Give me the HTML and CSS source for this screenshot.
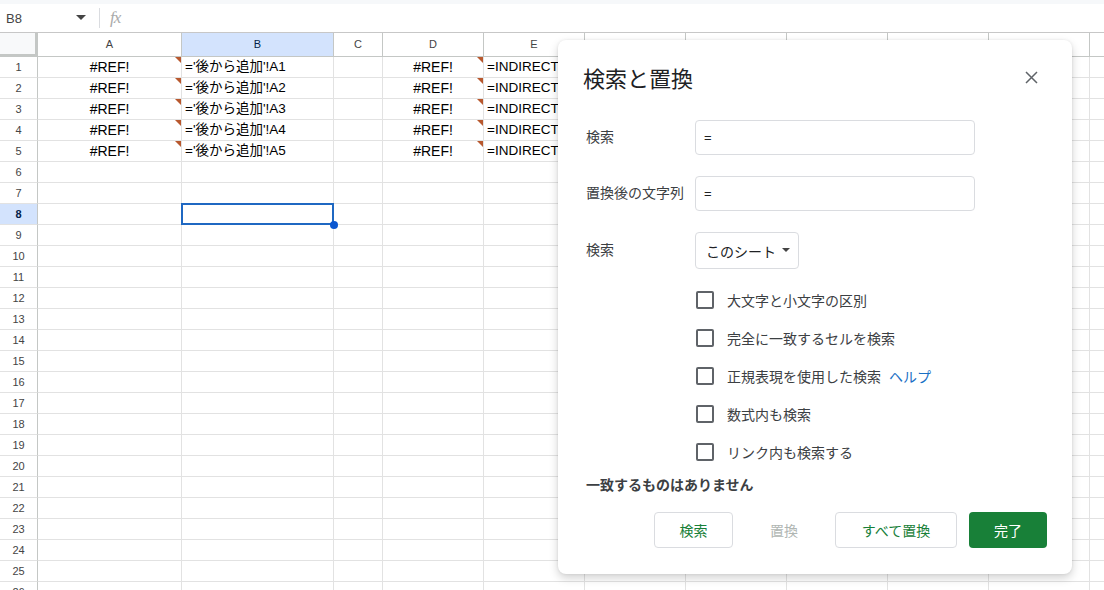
FILE: index.html
```html
<!DOCTYPE html>
<html lang="ja">
<head>
<meta charset="utf-8">
<title>検索と置換</title>
<link rel="stylesheet" href="styles.css">
</head>
<body>
<div class="app">
  <div class="strip"></div>
  <div class="fbar">
    <div class="namebox">B8</div>
    <svg class="nb-caret" width="10" height="6" viewBox="0 0 10 6"><path d="M0 0h10L5 5z" fill="#444"/></svg>
    <div class="fdiv"></div>
    <div class="fx">fx</div>
  </div>
  <div class="sheet">
    <div class="row hdr">
      <span class="corner"></span><span>A</span><span class="sel">B</span><span>C</span><span>D</span><span>E</span><span>F</span><span>G</span><span>H</span><span>I</span><span>J</span><span>K</span><span>L</span>
    </div>
    <div class="row"><span class="rn">1</span><span class="ctr err">#REF!</span><span>='後から追加'!A1</span><span></span><span class="ctr err">#REF!</span><span class="ovf">=INDIRECT("'後から追加'!A1")</span><span></span><span></span><span></span><span></span><span></span><span></span><span></span></div>
    <div class="row"><span class="rn">2</span><span class="ctr err">#REF!</span><span>='後から追加'!A2</span><span></span><span class="ctr err">#REF!</span><span class="ovf">=INDIRECT("'後から追加'!A2")</span><span></span><span></span><span></span><span></span><span></span><span></span><span></span></div>
    <div class="row"><span class="rn">3</span><span class="ctr err">#REF!</span><span>='後から追加'!A3</span><span></span><span class="ctr err">#REF!</span><span class="ovf">=INDIRECT("'後から追加'!A3")</span><span></span><span></span><span></span><span></span><span></span><span></span><span></span></div>
    <div class="row"><span class="rn">4</span><span class="ctr err">#REF!</span><span>='後から追加'!A4</span><span></span><span class="ctr err">#REF!</span><span class="ovf">=INDIRECT("'後から追加'!A4")</span><span></span><span></span><span></span><span></span><span></span><span></span><span></span></div>
    <div class="row"><span class="rn">5</span><span class="ctr err">#REF!</span><span>='後から追加'!A5</span><span></span><span class="ctr err">#REF!</span><span class="ovf">=INDIRECT("'後から追加'!A5")</span><span></span><span></span><span></span><span></span><span></span><span></span><span></span></div>
    <div class="row"><span class="rn">6</span><span></span><span></span><span></span><span></span><span></span><span></span><span></span><span></span><span></span><span></span><span></span><span></span></div>
    <div class="row"><span class="rn">7</span><span></span><span></span><span></span><span></span><span></span><span></span><span></span><span></span><span></span><span></span><span></span><span></span></div>
    <div class="row"><span class="rn sel">8</span><span></span><span class="active"></span><span></span><span></span><span></span><span></span><span></span><span></span><span></span><span></span><span></span><span></span></div>
    <div class="row"><span class="rn">9</span><span></span><span></span><span></span><span></span><span></span><span></span><span></span><span></span><span></span><span></span><span></span><span></span></div>
    <div class="row"><span class="rn">10</span><span></span><span></span><span></span><span></span><span></span><span></span><span></span><span></span><span></span><span></span><span></span><span></span></div>
    <div class="row"><span class="rn">11</span><span></span><span></span><span></span><span></span><span></span><span></span><span></span><span></span><span></span><span></span><span></span><span></span></div>
    <div class="row"><span class="rn">12</span><span></span><span></span><span></span><span></span><span></span><span></span><span></span><span></span><span></span><span></span><span></span><span></span></div>
    <div class="row"><span class="rn">13</span><span></span><span></span><span></span><span></span><span></span><span></span><span></span><span></span><span></span><span></span><span></span><span></span></div>
    <div class="row"><span class="rn">14</span><span></span><span></span><span></span><span></span><span></span><span></span><span></span><span></span><span></span><span></span><span></span><span></span></div>
    <div class="row"><span class="rn">15</span><span></span><span></span><span></span><span></span><span></span><span></span><span></span><span></span><span></span><span></span><span></span><span></span></div>
    <div class="row"><span class="rn">16</span><span></span><span></span><span></span><span></span><span></span><span></span><span></span><span></span><span></span><span></span><span></span><span></span></div>
    <div class="row"><span class="rn">17</span><span></span><span></span><span></span><span></span><span></span><span></span><span></span><span></span><span></span><span></span><span></span><span></span></div>
    <div class="row"><span class="rn">18</span><span></span><span></span><span></span><span></span><span></span><span></span><span></span><span></span><span></span><span></span><span></span><span></span></div>
    <div class="row"><span class="rn">19</span><span></span><span></span><span></span><span></span><span></span><span></span><span></span><span></span><span></span><span></span><span></span><span></span></div>
    <div class="row"><span class="rn">20</span><span></span><span></span><span></span><span></span><span></span><span></span><span></span><span></span><span></span><span></span><span></span><span></span></div>
    <div class="row"><span class="rn">21</span><span></span><span></span><span></span><span></span><span></span><span></span><span></span><span></span><span></span><span></span><span></span><span></span></div>
    <div class="row"><span class="rn">22</span><span></span><span></span><span></span><span></span><span></span><span></span><span></span><span></span><span></span><span></span><span></span><span></span></div>
    <div class="row"><span class="rn">23</span><span></span><span></span><span></span><span></span><span></span><span></span><span></span><span></span><span></span><span></span><span></span><span></span></div>
    <div class="row"><span class="rn">24</span><span></span><span></span><span></span><span></span><span></span><span></span><span></span><span></span><span></span><span></span><span></span><span></span></div>
    <div class="row"><span class="rn">25</span><span></span><span></span><span></span><span></span><span></span><span></span><span></span><span></span><span></span><span></span><span></span><span></span></div>
    <div class="row"><span class="rn">26</span><span></span><span></span><span></span><span></span><span></span><span></span><span></span><span></span><span></span><span></span><span></span><span></span></div>
  </div>

  <div class="dialog">
    <div class="dlg-head">
      <h1 class="dlg-title">検索と置換</h1>
      <svg class="close" width="13" height="13" viewBox="0 0 13 13"><path d="M1 1l11 11M12 1L1 12" stroke="#5f6368" stroke-width="1.5" fill="none"/></svg>
    </div>
    <div class="form">
      <label class="lbl">検索</label>
      <div class="input">=</div>
      <label class="lbl">置換後の文字列</label>
      <div class="input">=</div>
      <label class="lbl">検索</label>
      <div class="dd-wrap"><div class="dropdown"><span>このシート</span><svg width="8" height="5" viewBox="0 0 8 5"><path d="M0 0h8L4 4z" fill="#444"/></svg></div></div>
    </div>
    <div class="checks">
      <div class="chk"><span class="box"></span><span>大文字と小文字の区別</span></div>
      <div class="chk"><span class="box"></span><span>完全に一致するセルを検索</span></div>
      <div class="chk"><span class="box"></span><span>正規表現を使用した検索</span><a class="help">ヘルプ</a></div>
      <div class="chk"><span class="box"></span><span>数式内も検索</span></div>
      <div class="chk"><span class="box"></span><span>リンク内も検索する</span></div>
    </div>
    <div class="nomatch">一致するものはありません</div>
    <div class="buttons">
      <button class="btn outline b-find">検索</button>
      <button class="btn disabled b-rep">置換</button>
      <button class="btn outline b-all">すべて置換</button>
      <button class="btn primary b-done">完了</button>
    </div>
  </div>
</div>
</body>
</html>
```
FILE: styles.css
```css
* { box-sizing: border-box; }
html, body { margin: 0; padding: 0; }
body {
  width: 1104px;
  height: 590px;
  overflow: hidden;
  background: #fff;
  font-family: "Liberation Sans", Arial, "Noto Sans CJK JP", sans-serif;
  color: #000;
}
.app { position: relative; width: 1104px; height: 590px; overflow: hidden; }

.strip { height: 4px; background: #f6f8fa; }

.fbar {
  height: 29px;
  display: flex;
  align-items: center;
  border-bottom: 1px solid #c7c7c7;
  background: #fff;
}
.namebox { width: 72px; padding-left: 6px; font-size: 13px; color: #444; }
.nb-caret { margin-left: 4px; }
.fdiv { width: 1px; height: 20px; background: #dadce0; margin-left: 13px; }
.fx {
  margin-left: 10px;
  font-family: "Liberation Serif", serif;
  font-style: italic;
  font-size: 17px;
  color: #aaa;
  letter-spacing: -1px;
}

.sheet { display: flex; flex-direction: column; }
.row {
  display: grid;
  grid-template-columns: 38px 144px 152px 49px 101px 101px 101px 101px 101px 101px 101px 101px 101px;
  height: 21px;
  font-size: 13.5px;
}
.row > span {
  position: relative;
  border-right: 1px solid #e2e2e2;
  border-bottom: 1px solid #e2e2e2;
  padding: 0 3px;
  line-height: 20px;
  white-space: nowrap;
  overflow: hidden;
}
.row > span.ovf { overflow: visible; z-index: 1; background: #fff; }
.row > .ctr { text-align: center; font-size: 14px; }

.row.hdr { height: 24px; }
.row.hdr > span {
  text-align: center;
  font-size: 11px;
  color: #444;
  line-height: 23px;
  border-right: 1px solid #c4c7c5;
  border-bottom: 1px solid #c4c7c5;
}
.row.hdr > span.sel { background: #d3e3fd; color: #041e49; }
.row.hdr > span.corner {
  background: #f8f9fa;
  border-right: 3px solid #c4c7c5;
  border-bottom: 3px solid #c4c7c5;
}

.row > span.rn {
  text-align: center;
  font-size: 11px;
  color: #444;
  border-right: 1px solid #c4c7c5;
  border-bottom: 1px solid #e2e2e2;
  padding: 0;
}
.row > span.rn.sel { background: #d3e3fd; color: #041e49; font-weight: bold; }

.err::after {
  content: "";
  position: absolute;
  top: 0;
  right: 0;
  border-top: 6px solid #b8582e;
  border-left: 6px solid transparent;
}

.row > span.active { overflow: visible; z-index: 2; }
.active::before {
  content: "";
  position: absolute;
  left: -1px;
  top: -1px;
  right: -1px;
  bottom: -1px;
  border: 2px solid #1f68c2;
}
.active::after {
  content: "";
  position: absolute;
  right: -5px;
  bottom: -5px;
  width: 8px;
  height: 8px;
  border-radius: 50%;
  background: #0b57d0;
}

/* dialog */
.dialog {
  position: absolute;
  left: 558px;
  top: 40px;
  width: 514px;
  height: 534px;
  background: #fff;
  border-radius: 8px;
  box-shadow: 0 4px 10px rgba(0,0,0,0.18), 0 0 3px rgba(0,0,0,0.08);
  z-index: 10;
  padding: 23px 25px 25px 25px;
  font-family: "Liberation Sans", Arial, "Noto Sans CJK JP", sans-serif;
  color: #3c4043;
  display: flex;
  flex-direction: column;
}
.dlg-head { display: flex; align-items: center; justify-content: space-between; height: 28px; }
.dlg-title {
  margin: 0;
  font-size: 22px;
  font-weight: normal;
  color: #202124;
}
.close { margin-right: 9px; }

.form {
  margin-top: 29px;
  display: grid;
  grid-template-columns: 109px 280px;
  row-gap: 21px;
  align-items: center;
  padding-left: 3px;
}
.lbl { font-size: 14px; color: #3c4043; margin-top: -3px; }
.input {
  height: 35px;
  border: 1px solid #dadce0;
  border-radius: 4px;
  padding: 0 8px;
  font-size: 13px;
  line-height: 33px;
  color: #202124;
}
.dropdown {
  display: inline-flex;
  align-items: center;
  gap: 6px;
  height: 37px;
  width: 104px;
  border: 1px solid #dadce0;
  border-radius: 4px;
  padding: 0 0 0 10px;
  font-size: 14px;
  white-space: nowrap;
  color: #202124;
}

.checks {
  margin-top: 12px;
  padding-left: 113px;
  display: flex;
  flex-direction: column;
}
.chk {
  display: flex;
  align-items: center;
  height: 38px;
  font-size: 14px;
  color: #3c4043;
}
.box {
  width: 18px;
  height: 18px;
  border: 2px solid #5f6368;
  border-radius: 2px;
  margin-right: 13px;
}
.help { color: #1a6fc4; margin-left: 8px; font-size: 14px; }

.nomatch {
  margin-top: 4px;
  font-size: 14px;
  font-weight: bold;
  color: #3c4043;
  line-height: 20px;
  padding-left: 3px;
}

.buttons {
  margin-top: 17px;
  display: flex;
  justify-content: flex-end;
  gap: 12px;
}
.btn {
  height: 36px;
  border-radius: 4px;
  font-family: inherit;
  font-size: 14px;
  background: #fff;
  border: 1px solid transparent;
  padding: 0;
}
.outline { border-color: #dadce0; color: #188038; }
.disabled { color: #b0b6b3; }
.primary { background: #188038; color: #fff; }
.b-find { width: 79px; }
.b-rep { width: 78px; }
.b-all { width: 122px; }
.b-done { width: 78px; }
```
